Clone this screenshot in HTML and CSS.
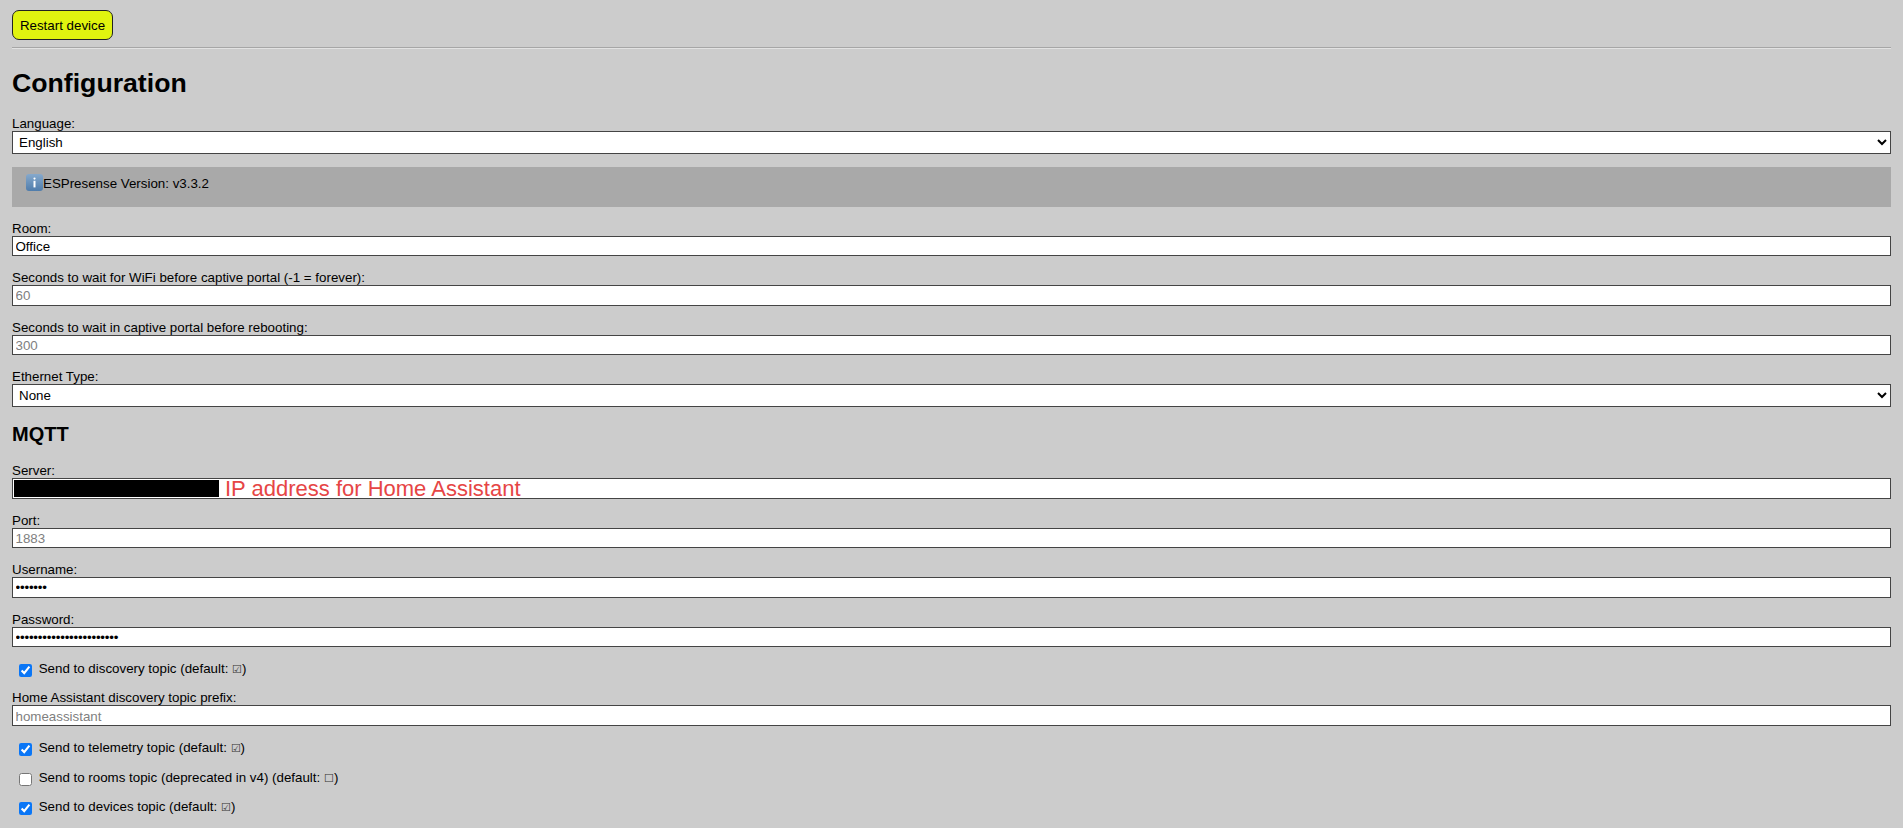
FILE: index.html
```html
<!DOCTYPE html>
<html lang="en">
<head>
    <meta charset="UTF-8">
    <meta name="viewport" content="width=device-width, initial-scale=1.0">
    <title>ESPresense Configuration</title>
    <link rel="stylesheet" href="styles.css">
</head>
<body>
    <button class="restart" type="button">Restart device</button>
    <hr class="rule">

    <h1>Configuration</h1>

    <form class="config">
        <div class="field lang">
            <label for="language">Language:</label>
            <select id="language">
                <option>English</option>
            </select>
        </div>

        <div class="info">
            <svg class="info-icon" viewBox="0 0 17 17" aria-hidden="true">
                <defs>
                    <linearGradient id="infoBlue" x1="0" y1="0" x2="0" y2="1">
                        <stop offset="0" stop-color="#86a9cc"/>
                        <stop offset="1" stop-color="#4f7cab"/>
                    </linearGradient>
                </defs>
                <rect width="17" height="17" rx="3" fill="url(#infoBlue)"/>
                <circle cx="8.5" cy="4.6" r="1.1" fill="#fff"/>
                <rect x="7.5" y="6.8" width="2" height="6.6" fill="#fff"/>
            </svg>
            <span>ESPresense Version: v3.3.2</span>
        </div>

        <div class="field">
            <label for="room">Room:</label>
            <input id="room" type="text" value="Office">
        </div>
        <div class="field">
            <label for="wifi-wait">Seconds to wait for WiFi before captive portal (-1 = forever):</label>
            <input id="wifi-wait" type="text" placeholder="60">
        </div>
        <div class="field">
            <label for="portal-wait">Seconds to wait in captive portal before rebooting:</label>
            <input id="portal-wait" type="text" placeholder="300">
        </div>
        <div class="field">
            <label for="eth">Ethernet Type:</label>
            <select id="eth">
                <option>None</option>
            </select>
        </div>

        <h2>MQTT</h2>

        <div class="field">
            <label for="server">Server:</label>
            <div class="server-wrap">
                <input id="server" type="text">
                <span class="redacted"></span>
                <span class="note">IP address for Home Assistant</span>
            </div>
        </div>
        <div class="field">
            <label for="port">Port:</label>
            <input id="port" type="text" placeholder="1883">
        </div>
        <div class="field">
            <label for="user">Username:</label>
            <input id="user" type="password" value="1234567">
        </div>
        <div class="field">
            <label for="pass">Password:</label>
            <input id="pass" type="password" value="12345678901234567890123">
        </div>

        <label class="check"><input type="checkbox" checked> Send to discovery topic (default: <span class="mark">☑</span>)</label>

        <div class="field prefix">
            <label for="prefix">Home Assistant discovery topic prefix:</label>
            <input id="prefix" type="text" placeholder="homeassistant">
        </div>

        <label class="check"><input type="checkbox" checked> Send to telemetry topic (default: <span class="mark">☑</span>)</label>
        <label class="check"><input type="checkbox"> Send to rooms topic (deprecated in v4) (default: <span class="mark">☐</span>)</label>
        <label class="check"><input type="checkbox" checked> Send to devices topic (default: <span class="mark">☑</span>)</label>
    </form>
</body>
</html>
```

FILE: styles.css
```css
/* General styles */
* {
    box-sizing: border-box;
}

body {
    margin: 0;
    padding: 10px 12px 0;
    background-color: #cccccc;
    color: #000;
    font-family: "Liberation Sans", Arial, sans-serif;
    font-size: 13.33px;
}

.restart {
    display: block;
    width: 101px;
    height: 30px;
    padding: 0;
    background-color: #e1f40f;
    border: 1px solid #222;
    border-radius: 7px;
    font-family: inherit;
    font-size: 13.33px;
    color: #000;
}

.rule {
    height: 2px;
    margin: 7px 0 0;
    border: 0;
    border-top: 1px solid #a6a6a6;
    border-bottom: 1px solid #e2e2e2;
}

h1 {
    margin: 18px 0 0;
    font-size: 26.66px;
    line-height: 32px;
}

h2 {
    margin: 16.5px 0 17px;
    font-size: 20px;
    line-height: 23px;
}

/* Form fields */
.field {
    margin-bottom: 14px;
}

.lang {
    margin-top: 17px;
    margin-bottom: 13px;
}

.field label {
    display: block;
    height: 15px;
    line-height: 15px;
}

.field input {
    display: block;
    width: 100%;
    height: 20.5px;
    padding: 1px 2.5px 0;
    background-color: #fff;
    border: 1px solid #444;
    border-radius: 0;
    font-family: inherit;
    font-size: 13.33px;
    color: #000;
    outline: none;
}

.field input::placeholder {
    color: #808080;
}

.field input[type="password"] {
    letter-spacing: -0.2px;
}

.field select {
    display: block;
    width: 100%;
    height: 22.5px;
    padding: 0 2px;
    background-color: #fff;
    border: 1px solid #444;
    border-radius: 0;
    font-family: inherit;
    font-size: 13.33px;
    color: #000;
}

/* Version banner */
.info {
    display: flex;
    align-items: flex-start;
    height: 40px;
    margin-bottom: 14px;
    padding: 7px 14px;
    background-color: #a9a9a9;
    line-height: 20px;
}

.info-icon {
    flex: none;
    width: 17px;
    height: 17px;
}

/* Annotations on the server row */
.server-wrap {
    position: relative;
}

.redacted {
    position: absolute;
    top: 2px;
    left: 2px;
    width: 205px;
    height: 17px;
    background-color: #000;
}

.note {
    position: absolute;
    top: 0;
    left: 213px;
    color: #e64545;
    font-size: 22px;
    line-height: 21px;
}

/* Checkbox rows */
.check {
    display: block;
    height: 15px;
    margin-bottom: 14.3px;
    padding-left: 7px;
    line-height: 15px;
}

.check input {
    width: 13px;
    height: 13px;
    margin: 0 3px 0 0;
    vertical-align: -4px;
    accent-color: #0a76f6;
}

.mark {
    color: #333;
    font-size: 10.5px;
}

.prefix {
    margin-bottom: 14.5px;
}
```
